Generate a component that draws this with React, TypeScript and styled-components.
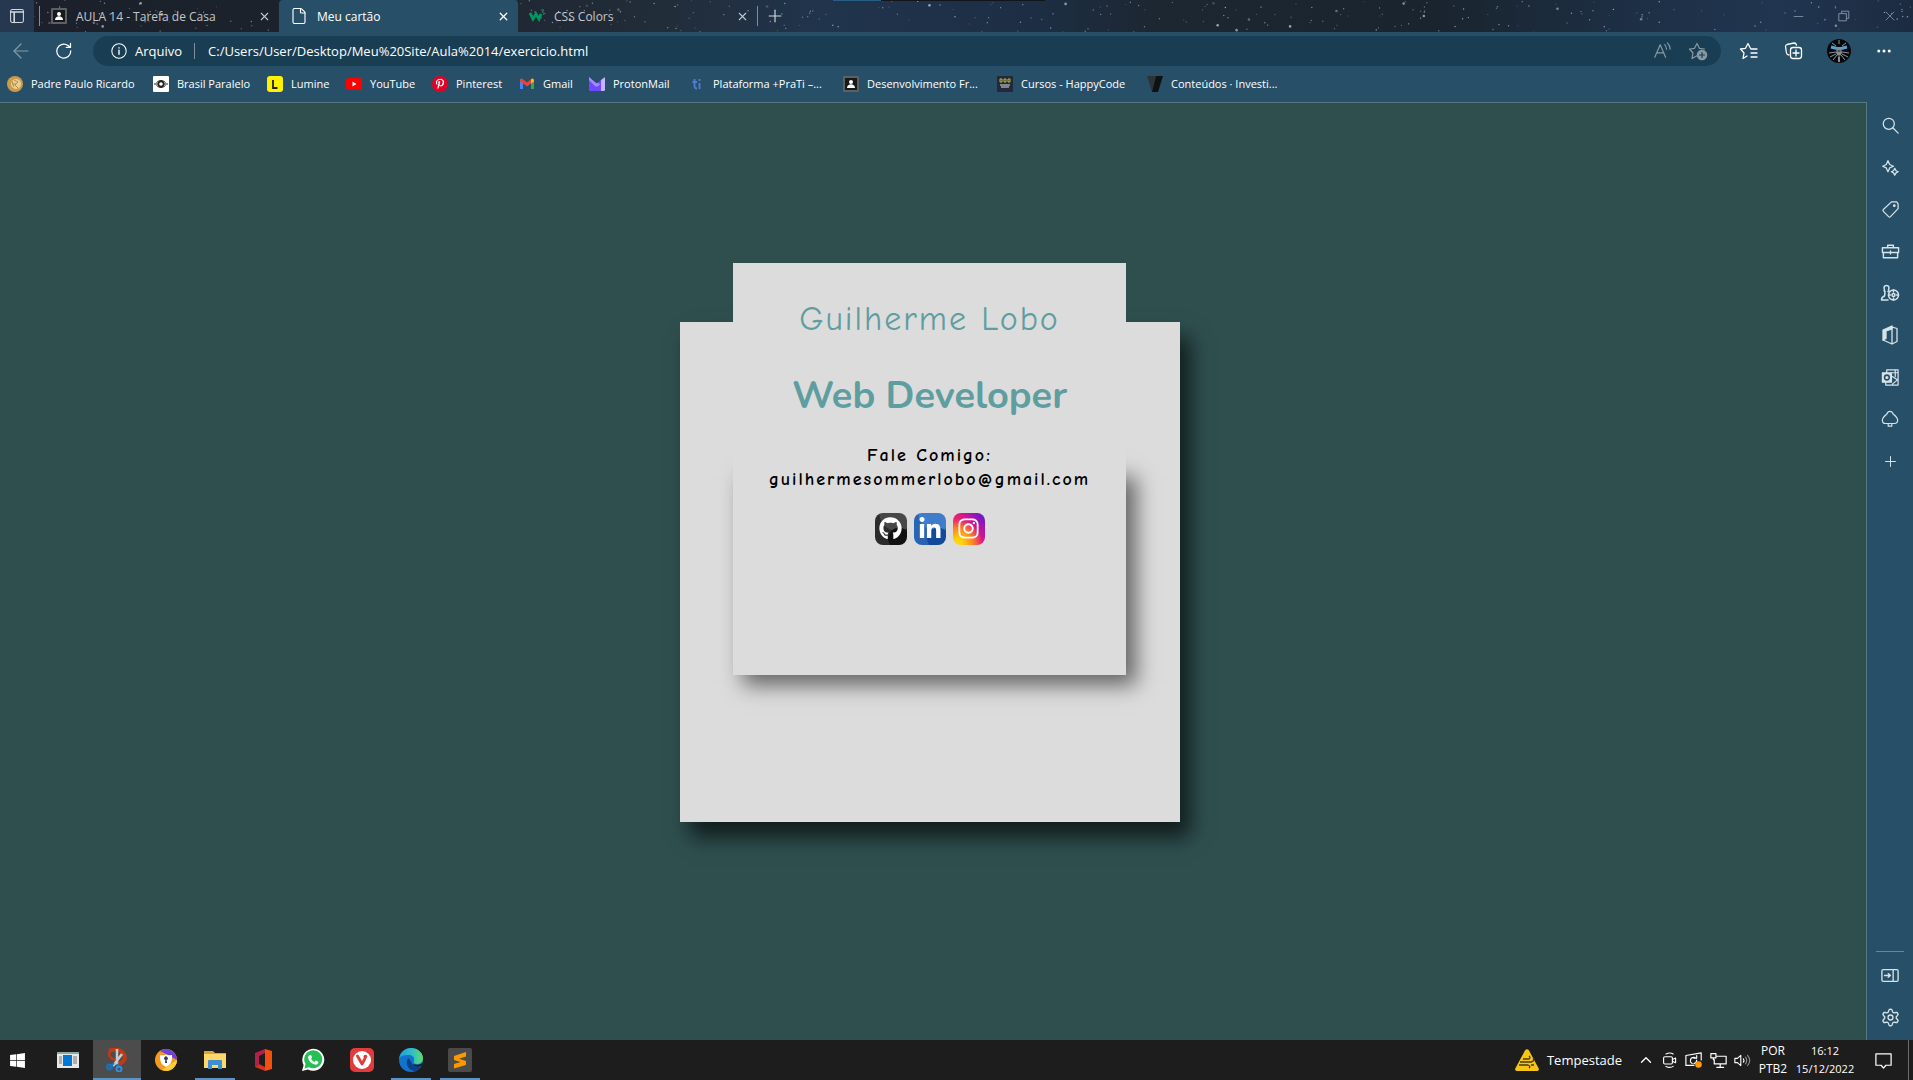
import React from "react";
import styled, { createGlobalStyle } from "styled-components";
import { Plus, X, ArrowLeft, Minus, File, Ellipsis, ChevronUp } from "lucide-react";
import { FaGithub, FaLinkedinIn, FaInstagram, FaWindows, FaPinterestP } from "react-icons/fa";

const UI = `"Open Sans", "Noto Sans", sans-serif`;
const HAND = `"Comic Neue", "Comic Sans MS", Lato, sans-serif`;

const Global = createGlobalStyle`
  *, *::before, *::after { box-sizing: border-box; }
  html, body, #root { height: 100%; margin: 0; }
  body { font-family: ${UI}; overflow: hidden; background: #2f4f4f; color: #fff; }
  button { border: 0; padding: 0; background: none; color: inherit; font: inherit; display: flex; align-items: center; justify-content: center; }
  a { color: inherit; text-decoration: none; }
  svg { display: block; flex: none; }
  h1, h2, p { margin: 0; }
`;

const Screen = styled.div`display: flex; flex-direction: column; height: 100vh;`;

/* tab strip */
const TabStrip = styled.header`
  display: flex; align-items: stretch; height: 32px; flex: none; overflow: hidden;
  background: #1b222c; position: relative;
`;
const Sky = styled.svg`position: absolute; inset: 0; width: 100%; height: 100%;`;
const StripButton = styled.button<{ $filled?: boolean }>`
  width: 34px; position: relative; flex: none; color: #d3d8dd;
  background: ${p => (p.$filled ? "#26384f" : "none")};
`;
const Divider = styled.span<{ $h: number; $m: string }>`
  width: 1px; height: ${p => p.$h}px; margin: ${p => p.$m}; background: #7f8e9c; align-self: center; position: relative; flex: none;
`;
const Tab = styled.div<{ $active?: boolean }>`
  display: flex; align-items: center; gap: 9px; width: 239px; padding: 0 8px 0 11px; font-size: 12px; position: relative;
  color: ${p => (p.$active ? "#fff" : "#c3c7cb")};
  background: ${p => (p.$active ? "#275068" : "transparent")};
  border-radius: 4px 4px 0 0;
  > span { flex: 1; white-space: nowrap; }
`;
const WindowButtons = styled.div`display: flex; margin-left: auto; position: relative; color: #8192a2; button { width: 46px; }`;

/* toolbar */
const Toolbar = styled.div`
  display: flex; align-items: center; height: 38px; padding: 0 7px 0 3px; background: #275068; flex: none;
`;
const ToolButton = styled.button<{ $w: number; $dim?: boolean }>`
  width: ${p => p.$w}px; height: 30px; flex: none; color: ${p => (p.$dim ? "#8799a3" : "#fff")};
`;
const Address = styled.div`
  display: flex; align-items: center; flex: 1; height: 30px; margin: 0 5px 0 4px; padding: 0 5px 0 18px; border-radius: 15px;
  background: #193e53; font-size: 13px;
  label { margin-left: 8px; }
  input { flex: 1; min-width: 0; border: 0; outline: 0; background: none; color: #fff; font: inherit; padding: 0; }
`;
const Bookmarks = styled.nav`
  display: flex; align-items: center; height: 32px; padding: 0 0 5px 7px; background: #275068; flex: none;
`;
const Bookmark = styled.a<{ $w: number }>`
  display: flex; align-items: center; gap: 8px; width: ${p => p.$w}px; font-size: 11px; white-space: nowrap; flex: none;
`;

/* page + sidebar */
const Middle = styled.div`display: flex; flex: 1; min-height: 0; background: #275068;`;
const Page = styled.main`
  flex: 1; display: flex; align-items: center; justify-content: center; padding-right: 6px;
  background: #2f4f4f; border: solid #56797f; border-width: 1px 1px 0 0;
`;
const Card = styled.section`
  width: 500px; height: 500px; display: flex; flex-direction: column; align-items: center; padding-right: 1px;
  background: #dcdcdc; box-shadow: 10px 15px 20px rgba(0, 0, 0, 0.65);
`;
const Inner = styled.div`
  width: 393px; height: 412px; margin-top: -59px; flex: none;
  display: grid; grid-template-rows: 204px 1fr; grid-template-columns: 100%;
`;
const Shade = styled.div`grid-area: 2 / 1; box-shadow: 10px 10px 20px rgba(0, 0, 0, 0.55);`;
const Content = styled.div`
  grid-area: 1 / 1 / 3 / 2; background: #dcdcdc; z-index: 1; text-align: center;
  display: flex; flex-direction: column; align-items: center; padding-top: 32px;
`;
const Name = styled.h1`color: #5f9ea0; font: 400 34px/48px ${HAND}; letter-spacing: 2px;`;
const Role = styled.h2`margin-top: 27px; color: #5f9ea0; font: 700 38px/52px Nunito, Lato, sans-serif;`;
const Contact = styled.p`margin-top: 22px; color: #000; font: 700 18px/24px ${HAND}; letter-spacing: 2px;`;
const Socials = styled.div`display: flex; gap: 7px; margin-top: 21px;`;
const Social = styled.a<{ $bg: string }>`
  width: 32px; height: 32px; border-radius: 8px; display: grid; place-items: center; color: #fff; background: ${p => p.$bg};
`;

const Sidebar = styled.aside`
  width: 46px; display: flex; flex-direction: column; align-items: center; padding: 2px 0; color: #d5e3ea; flex: none;
  button { width: 46px; height: 42px; flex: none; }
`;
const SideRule = styled.hr`width: 28px; height: 1px; border: 0; margin: auto 0 2px; background: #6a8797;`;

/* taskbar */
const Taskbar = styled.footer`display: flex; align-items: stretch; height: 40px; background: #1d1d1e; flex: none;`;
const Task = styled.button<{ $active?: boolean; $open?: boolean }>`
  width: ${p => (p.$active ? 48 : 40)}px; margin: 0 ${p => (p.$active ? 0 : 4)}px 0 ${p => (p.$active ? 1 : 5)}px; flex: none;
  background: ${p => (p.$active ? "#4c4c4c" : "none")};
  border-top: 2px solid transparent;
  border-bottom: 2px solid ${p => (p.$active || p.$open ? "#5c93c6" : "transparent")};
`;
const Start = styled.button`width: 34px; margin-right: 9px;`;
const Weather = styled.button`margin-left: auto; gap: 8px; font-size: 13px; padding-right: 12px;`;
const Tray = styled.button<{ $w?: number; $size?: number; $left?: boolean }>`
  width: ${p => p.$w ?? 24}px; flex: none; font-size: ${p => p.$size ?? 12}px; line-height: 18px; white-space: nowrap;
`;
const ShowDesktop = styled.button`width: 5px; border-left: 1px solid #6b6b6b;`;

const stars = Array.from({ length: 330 }, (_, i) => {
  const r = (n: number) => { const v = Math.sin(i * n + n) * 43758.5453; return v - Math.floor(v); };
  return { x: r(12.98) * 1913, y: r(78.23) * 32, s: r(37.7) > 0.93 ? 1.3 : 0.7, o: 0.15 + r(5.13) * 0.55 };
});

const Stroke = ({ d, s = 20, w = 1.3, children }: { d?: string; s?: number; w?: number; children?: React.ReactNode }) => (
  <svg width={s} height={s} viewBox="0 0 20 20" fill="none" stroke="currentColor" strokeWidth={w} strokeLinejoin="round" strokeLinecap="round">
    {d && <path d={d} />}{children}
  </svg>
);

const Classroom = () => (
  <svg width="16" height="16" viewBox="0 0 16 16"><rect width="16" height="16" rx="1" fill="#5c6064" /><rect x="2" y="2" width="12" height="12" fill="#17191b" /><circle cx="8" cy="6" r="2" fill="#fff" /><path d="M4 12c0-5 8-5 8 0z" fill="#fff" /></svg>
);
const W3 = () => (
  <svg width="16" height="16" viewBox="0 0 16 16" fill="none" stroke="#04965f" strokeWidth="2.8"><path d="M1 5l3 6 3-5 3 5 2-5" /><path d="M12 2h3l-2 2q3 0 1 3" strokeWidth="1" /></svg>
);
const Avatar = () => (
  <svg width="24" height="24" viewBox="0 0 24 24">
    <circle cx="12" cy="12" r="12" fill="#06080b" />
    <path d="M2 14l7-1M3 18l6-3M6 21l4-5M22 14l-7-1M21 18l-6-3M18 21l-4-5M5 4l4 3M19 4l-4 3M12 1v4" stroke="#8d959b" strokeWidth="1" />
    <path d="M4 8l6 1.500M20 8l-6 1.500" stroke="#4ba3d8" strokeWidth="3" />
    <path d="M10 8h4l1 6-2 3v6h-2v-6l-2-3z" fill="#888e94" />
    <path d="M10.500 12h3M11 17h2" stroke="#15181c" />
  </svg>
);

const bookmarks: { t: string; w: number; i: React.ReactNode }[] = [
  { t: "Padre Paulo Ricardo", w: 146, i: <svg width="16" height="16" viewBox="0 0 16 16"><circle cx="8" cy="8" r="8" fill="#c99b4b" /><circle cx="9" cy="8" r="5" fill="#e8cf94" /><path d="M7 4l4 2-3 3 3 3M5 8h4M5 5l2 6" stroke="#b98d42" fill="none" /></svg> },
  { t: "Brasil Paralelo", w: 114, i: <svg width="16" height="16" viewBox="0 0 16 16"><rect width="16" height="16" rx="1" fill="#fff" /><g fill="none" stroke="#222"><circle cx="8" cy="8" r="2.6" strokeWidth="1.6" /><path d="M1 8h4M11 8h4M3.5 6.500q4.500-4 9 0M3.500 9.500q4.500 4 9 0" /></g></svg> },
  { t: "Lumine", w: 79, i: <svg width="16" height="16" viewBox="0 0 16 16"><rect width="16" height="16" rx="3" fill="#fff200" /><path d="M6 4v8h4.500" stroke="#222" strokeWidth="1.8" fill="none" /></svg> },
  { t: "YouTube", w: 86, i: <svg width="16" height="16" viewBox="0 0 16 16"><rect y="2" width="16" height="12" rx="3" fill="#f00" /><path d="M6.500 5.500v5l4-2.500z" fill="#fff" /></svg> },
  { t: "Pinterest", w: 87, i: <svg width="16" height="16" viewBox="0 0 16 16"><circle cx="8" cy="8" r="8" fill="#e60023" /><FaPinterestP x={2.500} y={2.500} size={11} color="#fff" /></svg> },
  { t: "Gmail", w: 70, i: <svg width="16" height="16" viewBox="0 0 16 16"><path d="M1 3v10h3V6z" fill="#4285f4" /><path d="M15 3v10h-3V6z" fill="#34a853" /><path d="M1 3l2-.500 5 4 5-4 2 .500v2L8 10.500 1 5z" fill="#ea4335" /><path d="M12 3.300L13.500 2.500 15 4v1.500l-3 2.200z" fill="#fbbc04" /></svg> },
  { t: "ProtonMail", w: 100, i: <svg width="16" height="16" viewBox="0 0 16 16"><path d="M0 1l7 6h1.500L12 4v11H1.500Q0 15 0 13.500z" fill="#6d4aff" /><path d="M0 1l7 6q1 1 2-.500l2 2-2 1.500q-1.500 1-3 0L0 4z" fill="#a58bff" /><path d="M12 4l4-3v12.500q0 1.500-1.500 1.500H12z" fill="#c4b5ff" /></svg> },
  { t: "Plataforma +PraTi –...", w: 154, i: <svg width="16" height="16" viewBox="0 0 16 16" fill="none" stroke="#4d7fd6" strokeWidth="1.8"><path d="M5.500 3v7q0 2.500 2.500 2.500M3.500 6H8M10.500 7v6M10.500 3v2" /></svg> },
  { t: "Desenvolvimento Fr...", w: 154, i: <Classroom /> },
  { t: "Cursos - HappyCode", w: 150, i: <svg width="16" height="16" viewBox="0 0 16 16"><rect width="16" height="16" fill="#24283c" /><path d="M3 3h2v3H3zM7 3h2v3H7zM11 3h2v3h-2z" fill="none" stroke="#b6c22f" /><path d="M3 9h10M4 11h8" stroke="#ddd" /></svg> },
  { t: "Conteúdos · Investi...", w: 150, i: <svg width="16" height="16" viewBox="0 0 16 16"><path d="M0 0h9L5 16z" fill="#2a3439" /><path d="M9 0h7l-5 16H5z" fill="#111" /></svg> },
];

const side: [string, React.ReactNode][] = [
  ["Pesquisar", <Stroke s={17} w={1.5}><circle cx="8" cy="8" r="6.500" /><path d="M13 13l6 6" /></Stroke>],
  ["Descobrir", <Stroke s={17} w={1.5} d="M7 2l2 4.500L13.500 8.500 9 10.500 7 15 5 10.500.800 8.500 5 6.500zM15 11l1.500 2.800L19 15l-2.500 1.300L15 19l-1.500-2.700L11 15l2.500-1.200z" />],
  ["Compras", <Stroke s={19}><path d="M11 2h5.500L18 4v5l-8 8.500q-1 1-2 0L2.500 12q-1-1 0-2z" /><circle cx="14" cy="6" r=".8" fill="currentColor" /></Stroke>],
  ["Ferramentas", <Stroke s={19} w={1.5}><path d="M7 6V3.500h6V6M1.500 6h17v5h-17zM2.500 11v5.500h15V11M10 9.500v3" /></Stroke>],
  ["Jogos", <Stroke s={20} w={1.5}><path d="M8 17H1.500q0-3 3-4 .5-3 .5-4.500Q3.500 8 4.500 7 3 2.500 6.500 2.500T8.500 7q1 1-.5 1.500" /><circle cx="13.500" cy="12" r="5" /><circle cx="13.500" cy="12" r="1.500" /><path d="M13.500 7v2M13.500 15v2M8.500 12h2M16.500 12h2" /></Stroke>],
  ["Office", <Stroke s={20}><path d="M12 1L3 5v10l3-1.500V6l6-2z" fill="currentColor" /><path d="M3 15l9 4V2l5 1.500v13L12 19" /></Stroke>],
  ["Outlook", <Stroke s={19}><path d="M6 5V2h12v16H5v-3M12 9l6 4M12 17l6-5M11 5h7M15 2v7" /><rect x="1.500" y="5" width="9.500" height="10" fill="currentColor" /><circle cx="6.200" cy="10" r="2.500" stroke="#275068" strokeWidth="1.600" /></Stroke>],
  ["Árvore", <Stroke s={18}><path d="M10 1.500c2 0 3 1.500 3.500 3C16 6.500 18.500 9.500 18.500 11.500q0 3.500-3.500 3.500H5q-3.500 0-3.500-3.500c0-2 2.500-5 5-7C7 3 8 1.500 10 1.500zM8 15v3h4v-3" /></Stroke>],
  ["Adicionar", <Plus size={17} strokeWidth={1.4} />],
];

const gear = Array.from({ length: 48 }, (_, i) => {
  const a = (i / 48) * Math.PI * 2;
  const r = 7.4 + Math.max(-1, Math.min(1, 1.8 * Math.cos(a * 6))) * 1.3;
  return `${(10 + r * Math.sin(a)).toFixed(2)},${(10 - r * Math.cos(a)).toFixed(2)}`;
}).join(" ");

const tasks: { n: string; a?: boolean; o?: boolean; i: React.ReactNode }[] = [
  { n: "Leitor", i: <svg width="22" height="18" viewBox="0 0 22 18"><path d="M0 1h22v16H0z" fill="#e8e8e8" /><path d="M0 1h22v2H0z" fill="#8aa" /><path d="M6 4h9v11H6z" fill="#0078d7" /><path d="M2 6h3M2 8h3M2 10h3M2 12h3M16 6h4M16 8h4M16 10h4M16 12h4" stroke="#777" /></svg> },
  { n: "Captura", a: true, i: <svg width="24" height="24" viewBox="0 0 24 24" fill="none"><path d="M4 3q8-4 14 2 5 7-4 11" stroke="#c03a16" strokeWidth="4" /><path d="M5 3q-3 6 5 9" stroke="#c03a16" strokeWidth="2.5" /><path d="M12 1v16M17 6L8 18" stroke="#c6cbd0" strokeWidth="2.5" /><path d="M9 15l-5 5M12 16l2 4" stroke="#1872bd" strokeWidth="2" /><circle cx="4.500" cy="19" r="2.500" stroke="#1872bd" strokeWidth="2" /><circle cx="14" cy="21" r="2.500" stroke="#2c8fe0" strokeWidth="2" /></svg> },
  { n: "Avast Secure Browser", i: <svg width="22" height="22" viewBox="0 0 22 22"><circle cx="11" cy="11" r="11" fill="#f59a1f" /><path d="M5 2a11 11 0 0 1 17 9l-9-5z" fill="#6b45d8" /><path d="M22 11a11 11 0 0 1-15 10l9-6z" fill="#ffd234" /><path d="M5 6q6 1 6-1 0 2 6 1 1 9-6 12-7-3-6-12z" fill="#fff" /><path d="M10 14l.3-3a1.800 1.800 0 1 1 1.400 0l.3 3h-2z" fill="#33405c" /></svg> },
  { n: "Explorador", o: true, i: <svg width="22" height="20" viewBox="0 0 22 20"><path d="M0 1h9l2 2h11v15H0z" fill="#dca531" /><path d="M0 4h22v14H0z" fill="#ffd76b" /><path d="M4 19v-8q0-1 1-1h12q1 0 1 1v8h-4v-4H8v4z" fill="#3d8fd1" /></svg> },
  { n: "Office", i: <svg width="20" height="24" viewBox="0 0 20 24"><path d="M11 1L1 5v14l4-3V8l6-3z" fill="#b3204b" /><path d="M11 1l7 2v18l-7 2z" fill="#f2500f" /><path d="M1 19l10 4v-4l-6-3z" fill="#d72f20" /></svg> },
  { n: "WhatsApp", i: <svg width="24" height="24" viewBox="0 0 24 24"><path d="M1 23l1.600-6A11 11 0 1 1 7 21.400z" fill="#fff" /><path d="M3.500 20.500l1-4.500A9 9 0 1 1 8 19.300z" fill="#25c053" /><path d="M8.500 7l1.500-.2 1 2.600-1 1.300q1.300 2.300 3.500 3.300l1.300-1.500 2.600 1.300q0 2.700-2.700 2.900Q8 15.500 7 9.500 7 8 8.500 7z" fill="#fff" /></svg> },
  { n: "Vivaldi", i: <svg width="24" height="24" viewBox="0 0 24 24"><rect width="24" height="24" rx="5" fill="#e23b3c" /><circle cx="12" cy="12" r="9" fill="#fff" /><path d="M7.500 8l4.500 8 2.500-4.500q1-2 .5-3" stroke="#e23b3c" strokeWidth="2.800" strokeLinecap="round" strokeLinejoin="round" fill="none" /><circle cx="15.500" cy="8.500" r="1.800" fill="#e23b3c" /></svg> },
  { n: "Edge", o: true, i: <svg width="24" height="24" viewBox="0 0 24 24"><defs><linearGradient id="eg" x1="0" x2="1"><stop offset="0" stopColor="#1e9de0" /><stop offset=".6" stopColor="#35c1c0" /><stop offset="1" stopColor="#5fdc63" /></linearGradient></defs><circle cx="12" cy="12" r="12" fill="#1273cc" /><path d="M0 11C1 4 6 0 12 0c7 0 12 5 12 10 0 4-3 6-6 6s-4-1-3-3c1-4-2-6-5-6-5 0-9 1-10 4z" fill="url(#eg)" /><path d="M9 10c-3 5 0 12 6 13 3-.5 6-2 7.500-5-3 1.500-7 1-8.500-1-2-2-2-5-5-7z" fill="#0d3f86" /><path d="M14 16c1 3 5 4 10 1l1-3c-4 3-8 3.500-11 2z" fill="#1d1d1e" /></svg> },
  { n: "Sublime Text", o: true, i: <svg width="24" height="24" viewBox="0 0 24 24"><rect width="24" height="24" rx="2" fill="#4a4a4a" /><path d="M18 4v4.500l-7 2.200 7 2.300v4L6 20.500V16l6.500-2L6 12V8z" fill="#ff9800" /></svg> },
];

const Reload = () => (
  <Stroke s={18} w={1.4}><path d="M17.500 10a7.800 7.800 0 1 1-3-6l2.500 2M17.200 1.500V6h-4.700" /></Stroke>
);

export default function App() {
  return (
    <Screen>
      <Global />
      <TabStrip>
        <Sky aria-hidden="true">
          <defs>
            <linearGradient id="sky">
              <stop offset="0" stopColor="#1b202a" /><stop offset=".2" stopColor="#1c232d" /><stop offset=".35" stopColor="#222d3a" /><stop offset=".43" stopColor="#20344c" />
              <stop offset=".54" stopColor="#1d2e44" /><stop offset=".6" stopColor="#1c2732" /><stop offset=".75" stopColor="#19242e" />
              <stop offset=".85" stopColor="#1d2f44" /><stop offset=".93" stopColor="#213550" /><stop offset="1" stopColor="#1c2b40" />
            </linearGradient>
          </defs>
          <rect width="100%" height="100%" fill="url(#sky)" />
          {stars.map((s, i) => <circle key={i} cx={s.x} cy={s.y} r={s.s} fill="#d7e4f2" opacity={s.o} />)}
          <path d="M833 0h48v1h-48z" fill="#275f82" /><path d="M881 0h164v1H881z" fill="#11161d" />
        </Sky>
        <StripButton $filled aria-label="Menu de guias">
          <Stroke s={16} w={1.3}><rect x="2" y="2" width="16" height="16" rx="2" /><path d="M2 5h16M6.500 6v12" strokeWidth="2" /></Stroke>
        </StripButton>
        <Divider $h={20} $m="0 0 0 5px" />
        <Tab><Classroom /><span>AULA 14 - Tarefa de Casa</span><button aria-label="Fechar"><X size={13} strokeWidth={2} /></button></Tab>
        <Tab $active><File size={18} strokeWidth={1.5} /><span>Meu cartão</span><button aria-label="Fechar"><X size={13} strokeWidth={2.4} /></button></Tab>
        <Tab><W3 /><span>CSS Colors</span><button aria-label="Fechar"><X size={13} strokeWidth={2} /></button></Tab>
        <Divider $h={20} $m="0" />
        <StripButton aria-label="Nova guia"><Plus size={20} strokeWidth={1.4} /></StripButton>
        <WindowButtons>
          <button aria-label="Minimizar"><Minus size={15} strokeWidth={1.4} /></button>
          <button aria-label="Restaurar"><Stroke s={12} w={1.6}><path d="M2 6h12v12H2zM6 5V2h12v12h-3" /></Stroke></button>
          <button aria-label="Fechar janela"><X size={16} strokeWidth={1.3} /></button>
        </WindowButtons>
      </TabStrip>
      <Toolbar>
        <ToolButton $w={36} $dim aria-label="Voltar"><ArrowLeft size={24} strokeWidth={1.2} /></ToolButton>
        <ToolButton $w={50} aria-label="Recarregar"><Reload /></ToolButton>
        <Address>
          <Stroke s={16} w={1.3}><circle cx="10" cy="10" r="9" /><path d="M10 9v5M10 6v.2" strokeWidth="1.700" /></Stroke>
          <label htmlFor="url">Arquivo</label>
          <Divider $h={16} $m="0 13px 0 12px" />
          <input id="url" defaultValue="C:/Users/User/Desktop/Meu%20Site/Aula%2014/exercicio.html" />
          <ToolButton $w={36} $dim aria-label="Ler em voz alta"><Stroke s={18}><path d="M2 17L8 3l6 14M4 12h8M13 3q2 2 2 5M16 1q3 3 3 7" /></Stroke></ToolButton>
          <ToolButton $w={36} $dim aria-label="Adicionar aos favoritos">
            <Stroke s={20} w={1.2}><path d="M8.500 15L4 17.500l1-5.500L1.500 8l5-.700L9 2.500l2.400 4.800 5 .700" /><circle cx="14" cy="14" r="4.700" fill="currentColor" /><path d="M14 11.500v5M11.500 14h5" stroke="#193e53" /></Stroke>
          </ToolButton>
        </Address>
        <ToolButton $w={45} aria-label="Favoritos"><Stroke s={20}><path d="M8 15l-4 2.500L5 12 1.500 8l5-.700L9 2.500l2.400 4.800M12 8h6M12 12h6M12 16h6" /></Stroke></ToolButton>
        <ToolButton $w={45} aria-label="Coleções"><Stroke s={20}><path d="M5 14q-2 0-2.500-2L1.500 5.500Q1.500 4 3 3.500L10 2q2 0 2.500 2" /><rect x="6.500" y="6.500" width="11" height="11" rx="2.500" /><path d="M12 9v6M9 12h6" /></Stroke></ToolButton>
        <ToolButton $w={45} aria-label="Perfil"><Avatar /></ToolButton>
        <ToolButton $w={45} aria-label="Mais"><Ellipsis size={18} strokeWidth={2} /></ToolButton>
      </Toolbar>
      <Bookmarks>
        {bookmarks.map(b => <Bookmark key={b.t} href="#" $w={b.w}>{b.i}<span>{b.t}</span></Bookmark>)}
      </Bookmarks>
      <Middle>
        <Page>
          <Card>
            <Inner>
              <Shade />
              <Content>
                <Name>Guilherme Lobo</Name>
                <Role>Web Developer</Role>
                <Contact>Fale Comigo:<br />guilhermesommerlobo@gmail.com</Contact>
                <Socials>
                  <Social href="#" aria-label="GitHub" $bg="radial-gradient(circle at 75% 80%, #111 30%, transparent 32%), radial-gradient(circle at 70% 0, #484848 45%, #2c2c2c 47%)"><FaGithub size={23} /></Social>
                  <Social href="#" aria-label="LinkedIn" $bg="radial-gradient(circle at 75% 80%, #114a99 30%, transparent 32%), radial-gradient(circle at 70% 0, #3f7dcb 45%, #2863b4 47%)"><FaLinkedinIn size={24} /></Social>
                  <Social href="#" aria-label="Instagram" $bg="radial-gradient(circle at 15% 95%, #ffd60a 10%, #ff8a1f 35%, transparent 60%), linear-gradient(50deg, #ff2d55 25%, #d6168c 60%, #7416c9 90%)"><FaInstagram size={23} /></Social>
                </Socials>
              </Content>
            </Inner>
          </Card>
        </Page>
        <Sidebar>
          {side.map(([n, i]) => <button key={n} aria-label={n}>{i}</button>)}
          <SideRule />
          <button aria-label="Ocultar barra lateral"><Stroke s={18} w={1.5}><rect x="1" y="4" width="18" height="13" rx="1.500" /><path d="M13.500 4v13M4 10.500h6M8 8.500l2.500 2L8 12.500" /></Stroke></button>
          <button aria-label="Configurações"><Stroke s={19} w={1.4}><polygon points={gear} /><circle cx="10" cy="10" r="2.600" /></Stroke></button>
        </Sidebar>
      </Middle>
      <Taskbar>
        <Start aria-label="Iniciar"><FaWindows size={17} /></Start>
        {tasks.map(t => <Task key={t.n} aria-label={t.n} $active={t.a} $open={t.o}>{t.i}</Task>)}
        <Weather>
          <svg width="24" height="22" viewBox="0 0 24 22"><path d="M10 1.500q2-2.500 4 0L24 20q0 2-2 2H2q-2 0-2-2z" fill="#f5c518" /><path d="M8 10h6q2-1.500 0-3M5 13h11q4-1 2-3.500M4 16h9q3 1 1 3M16 16h3" stroke="#4a3b05" strokeWidth="1.300" fill="none" /></svg>
          <span>Tempestade</span>
        </Weather>
        <Tray aria-label="Mostrar ícones ocultos"><ChevronUp size={18} strokeWidth={1.8} /></Tray>
        <Tray aria-label="Reunir agora"><Stroke s={16} w={1.4}><rect x="2" y="6" width="11" height="9" rx="1.500" /><path d="M13 9.500l4-2v6l-4-2M5 2.500q5-2.500 9 0M5 18q5 2.500 9 0" /></Stroke></Tray>
        <Tray aria-label="Atualização">
          <Stroke s={18} w={1.3}><path d="M1 5l17-3v8M1 5v11h9M6 11q0-4 4-4l3 1M13 5v3h-3M6 12l2 2M13 10q0 3-3 4" /><circle cx="15" cy="15" r="3" fill="#ff9a0a" stroke="#ff9a0a" /></Stroke>
        </Tray>
        <Tray aria-label="Rede"><Stroke s={17} w={1.4}><path d="M8 5h11v9H5V9M1 2h6v5H1zM4 7v2M12 14v4M8 18h8" /></Stroke></Tray>
        <Tray aria-label="Volume"><Stroke s={17} w={1.3}><path d="M1 7.500h3L8 4v12l-4-3.500H1zM11 8q1.500 2 0 4" /><path d="M13.500 6q3 4 0 8M16 4q5 6 0 12" opacity=".5" /></Stroke></Tray>
        <Tray $w={38}>POR<br />PTB2</Tray>
        <Tray $w={66} $size={11}>16:12<br />15/12/2022</Tray>
        <Tray $w={50} aria-label="Notificações"><Stroke s={19} w={1.3}><path d="M2 3h16v12h-5.500L10 18l-2.500-3H2z" /></Stroke></Tray>
        <ShowDesktop aria-label="Mostrar área de trabalho" />
      </Taskbar>
    </Screen>
  );
}
